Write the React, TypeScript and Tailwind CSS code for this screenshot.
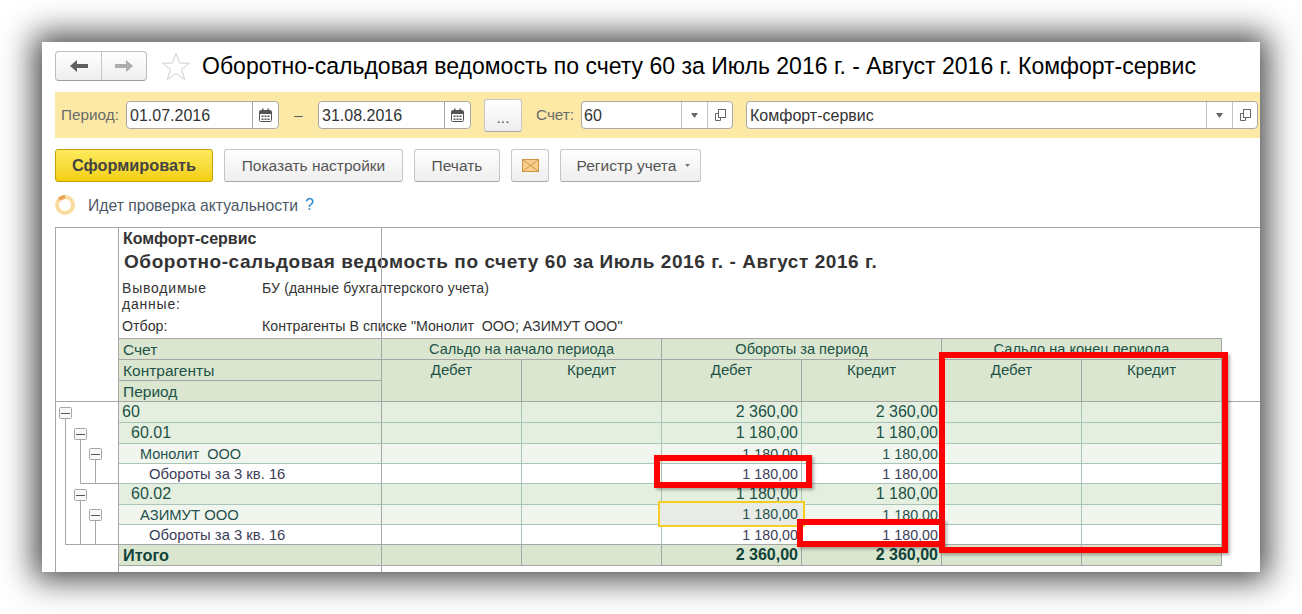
const big = "text-[16px] text-[#1d5248]";
const midNum = "text-[14.3px] text-[#24504c]";
const lowNum = "text-[14.3px] text-[#3c3c58]";

const rows = [
  { label: "60", pad: "pl-[3px]", bg: "bg-[#e5efdf]", text: big, num: big, d: "2 360,00", k: "2 360,00" },
  { label: "60.01", pad: "pl-[12px]", bg: "bg-[#e5efdf]", text: big, num: big, d: "1 180,00", k: "1 180,00" },
  { label: "Монолит  ООО", pad: "pl-[21px]", bg: "bg-[#f0f5ee]", text: "text-[14.5px] text-[#24504c]", num: midNum, d: "1 180,00", k: "1 180,00" },
  { label: "Обороты за 3 кв. 16", pad: "pl-[30px]", bg: "bg-white", text: "text-[14.8px] text-[#3c3c58]", num: lowNum, d: "1 180,00", k: "1 180,00" },
  { label: "60.02", pad: "pl-[12px]", bg: "bg-[#e5efdf]", text: big, num: big, d: "1 180,00", k: "1 180,00" },
  { label: "АЗИМУТ ООО", pad: "pl-[21px]", bg: "bg-[#f0f5ee]", text: "text-[14.8px] text-[#24504c]", num: midNum, d: "1 180,00", k: "1 180,00" },
  { label: "Обороты за 3 кв. 16", pad: "pl-[30px]", bg: "bg-white", text: "text-[14.8px] text-[#3c3c58]", num: lowNum, d: "1 180,00", k: "1 180,00" },
];

function CalendarIcon() {
  return (
    <svg width="13" height="14" viewBox="0 0 13 14">
      <rect x="0.5" y="2.5" width="12" height="11" rx="1" fill="#fff" stroke="#555" />
      <rect x="1" y="3" width="11" height="3" fill="#555" />
      <rect x="3" y="0.5" width="1.5" height="3" fill="#555" />
      <rect x="8.5" y="0.5" width="1.5" height="3" fill="#555" />
      <path d="M2.5 7.5h2v1.5h-2zM5.5 7.5h2v1.5h-2zM8.5 7.5h2v1.5h-2zM2.5 10.5h2v1.5h-2zM5.5 10.5h2v1.5h-2zM8.5 10.5h2v1.5h-2z" fill="#555" />
    </svg>
  );
}

function CopyIcon() {
  return (
    <svg width="13" height="14" viewBox="0 0 13 14" fill="none" stroke="#666">
      <rect x="4.5" y="1.5" width="7" height="8" fill="#fff" />
      <path d="M4.5 5.5h-3v7h5v-3" />
    </svg>
  );
}

function Caret() {
  return (
    <svg width="7" height="5" viewBox="0 0 7 5">
      <path d="M0 0h7L3.5 5z" fill="#666" />
    </svg>
  );
}

function DateField({ value }: { value: string }) {
  return (
    <div className="flex w-[153px] h-[28px] bg-white border border-[#a9a9a9] rounded-[4px]">
      <div className="flex-1 pl-[3px] text-[16px] leading-[28px] text-[#333]">{value}</div>
      <div className="w-[26px] border-l border-[#a9a9a9] flex items-center justify-center">
        <CalendarIcon />
      </div>
    </div>
  );
}

function SelectField({ value, className }: { value: string; className: string }) {
  return (
    <div className={`flex h-[28px] bg-white border border-[#a9a9a9] rounded-[4px] ${className}`}>
      <div className="flex-1 pl-[2px] text-[16px] leading-[28px] text-[#333]">{value}</div>
      <div className="w-[26px] border-l border-[#c4c4c4] flex items-center justify-center">
        <Caret />
      </div>
      <div className="w-[25px] border-l border-[#c4c4c4] flex items-center justify-center">
        <CopyIcon />
      </div>
    </div>
  );
}

function ToolButton({ children, className }: { children: React.ReactNode; className: string }) {
  return (
    <div className={`flex items-center justify-center h-[33px] rounded-[3px] border border-[#c6c6c6] border-b-[#a8a8a8] bg-linear-to-b from-white to-[#eeeeee] text-[15.5px] text-[#555] ${className}`}>
      {children}
    </div>
  );
}

export default function App() {
  const cell = "border-r border-b";
  return (
    <div className="w-[1302px] h-[614px] overflow-hidden bg-white pt-[42px] pl-[42px] font-['Liberation_Sans',Arial,sans-serif]">
      <div className="relative w-[1218px] h-[530px] bg-white overflow-visible shadow-[0_0_30px_8px_rgba(0,0,0,0.72)]">
        <div className="h-[530px] overflow-hidden pl-[13px] pt-[9px]">
          {/* Header */}
          <div className="flex items-center h-[30px]">
            <div className="flex w-[92px] h-[30px] rounded-[4px] border border-[#bdbdbd] border-b-[#9f9f9f] bg-linear-to-b from-white to-[#eeeeee]">
              <div className="w-[46px] border-r border-[#c8c8c8] flex items-center justify-center">
                <svg width="18" height="12" viewBox="0 0 18 12">
                  <path d="M0 6l7-6v4h11v4H7v4z" fill="#5f5f5f" />
                </svg>
              </div>
              <div className="flex-1 flex items-center justify-center">
                <svg width="18" height="12" viewBox="0 0 18 12">
                  <path d="M18 6l-7-6v4H0v4h11v4z" fill="#adadad" />
                </svg>
              </div>
            </div>
            <svg className="ml-[14px]" width="30" height="29" viewBox="0 0 30 29">
              <path d="M15 1.5l3.6 9.6h10l-8 6.2 3 10.2L15 21.4l-8.6 6.1 3-10.2-8-6.2h10z" fill="#fff" stroke="#cfcfcf" />
            </svg>
            <h1 className="ml-[11px] text-[23.03px] leading-[30px] text-black whitespace-nowrap">
              Оборотно-сальдовая ведомость по счету 60 за Июль 2016 г. - Август 2016 г. Комфорт-сервис
            </h1>
          </div>

          {/* Filter bar */}
          <div className="flex items-center h-[46px] mt-[11px] bg-[#fce9a6] pl-[6px] overflow-hidden">
            <span className="w-[65px] text-[15.3px] text-[#6b6b6b]">Период:</span>
            <DateField value="01.07.2016" />
            <span className="w-[39px] text-center text-[15px] text-[#555]">–</span>
            <DateField value="31.08.2016" />
            <ToolButton className="w-[38px] ml-[13px] pt-[6px] text-[#444]">...</ToolButton>
            <span className="ml-[14px] w-[45px] text-[15.3px] text-[#6b6b6b]">Счет:</span>
            <SelectField value="60" className="w-[152px]" />
            <SelectField value="Комфорт-сервис" className="w-[512px] ml-[13px] pl-px shrink-0" />
          </div>

          {/* Actions */}
          <div className="flex items-center mt-[11px] gap-[11px]">
            <div className="flex items-center justify-center w-[158px] h-[33px] rounded-[3px] border border-[#c2a000] bg-linear-to-b from-[#fdeb5a] to-[#f4cf00] text-[16.3px] font-bold text-[#444]">
              Сформировать
            </div>
            <ToolButton className="w-[179px]">Показать настройки</ToolButton>
            <ToolButton className="w-[86px]">Печать</ToolButton>
            <ToolButton className="w-[38px]">
              <svg width="17" height="13" viewBox="0 0 17 13">
                <rect x="0.5" y="0.5" width="16" height="12" fill="#f6cf8e" stroke="#cf9440" />
                <path d="M1 1l15 11M16 1L1 12" stroke="#cf9440" fill="none" />
              </svg>
            </ToolButton>
            <ToolButton className="w-[141px] gap-[9px] pl-[6px]">
              Регистр учета
              <svg width="5" height="3" viewBox="0 0 5 3">
                <path d="M0 0h5L2.5 3z" fill="#777" />
              </svg>
            </ToolButton>
          </div>

          {/* Status */}
          <div className="flex items-center h-[20px] mt-[13px]">
            <svg width="20" height="20" viewBox="0 0 20 20" fill="none">
              <circle cx="10" cy="10" r="8" stroke="#fbdca0" strokeWidth="4" />
              <path d="M4.3 4.3A8 8 0 0 1 10 2" stroke="#e8a455" strokeWidth="4" />
            </svg>
            <span className="ml-[13px] pt-[2px] text-[15.7px] leading-[22px] text-[#4d5866]">Идет проверка актуальности</span>
            <span className="ml-[7px] text-[16px] leading-[20px] text-[#1f86c8]">?</span>
          </div>

          {/* Report */}
          <div className="mt-[12px] border-t border-[#a6a6a6] grid grid-cols-[64px_263px_140px_140px_140px_140px_140px_140px_38px] grid-rows-[111px_21px_21px_21px_21px_21px_20px_20px_21px_20px_20px_21px_7px] text-[#1d5248]">
            <div className="row-span-4 border-l border-r border-b border-[#a6a6a6]" />
            <div className="border-b border-[#a6a6a6] pl-[4px] whitespace-nowrap text-[#333]">
              <div className="text-[16px] leading-[16px] pt-[3px] font-bold">Комфорт-сервис</div>
              <div className="text-[19px] leading-[22px] mt-[4px] ml-px font-bold tracking-[0.56px]">
                Оборотно-сальдовая ведомость по счету 60 за Июль 2016 г. - Август 2016 г.
              </div>
              <div className="flex mt-[7px] text-[14px] leading-[16px] -ml-px">
                <div className="w-[140px] shrink-0 tracking-[0.8px]">Выводимые<br />данные:</div>
                <div className="tracking-[0.17px]">БУ (данные бухгалтерского учета)</div>
              </div>
              <div className="flex mt-[6px] text-[14.2px] leading-[16px] -ml-px">
                <div className="w-[140px] shrink-0">Отбор:</div>
                <div className="whitespace-pre">Контрагенты В списке "Монолит  ООО; АЗИМУТ ООО"</div>
              </div>
            </div>
            <div className="col-span-6 -ml-px border-l border-b border-[#a6a6a6]" />
            <div className="row-span-4 border-b border-[#a6a6a6]" />

            {/* Table head */}
            <div className={`${cell} border-[#a6a6a6] bg-[#dae6cf] pl-[4px] text-[15.5px] leading-[21px]`}>Счет</div>
            <div className={`col-span-2 ${cell} border-[#a6a6a6] bg-[#dae6cf] text-center text-[14.6px] leading-[21px]`}>Сальдо на начало периода</div>
            <div className={`col-span-2 ${cell} border-[#a6a6a6] bg-[#dae6cf] text-center text-[14.6px] leading-[21px]`}>Обороты за период</div>
            <div className={`col-span-2 ${cell} border-[#a6a6a6] bg-[#dae6cf] text-center text-[14.6px] leading-[21px]`}>Сальдо на конец периода</div>
            <div className={`${cell} border-[#a6a6a6] bg-[#dae6cf] pl-[4px] text-[15.5px] leading-[21px]`}>Контрагенты</div>
            {["Дебет", "Кредит", "Дебет", "Кредит", "Дебет", "Кредит"].map((t, i) => (
              <div key={i} className={`row-span-2 ${cell} border-[#a6a6a6] bg-[#dae6cf] text-center text-[15px] leading-[20px]`}>{t}</div>
            ))}
            <div className={`${cell} border-[#a6a6a6] bg-[#dae6cf] pl-[4px] text-[15.5px] leading-[21px]`}>Период</div>

            {/* Tree */}
            <div className="col-start-1 row-start-5 row-span-9 border-l border-r border-[#a6a6a6]">
              <svg width="62" height="171" viewBox="0 0 62 171" fill="none">
                <path d="M9.5 17V142.5H62M24.5 37V81.5H62M39.5 57V81.5M24.5 98V142.5M39.5 118V142.5" stroke="#a6a6a6" />
                {[[3, 5], [18, 26], [33, 46], [18, 87], [33, 107]].map(([x, y], i) => (
                  <g key={i}>
                    <rect x={x + 0.5} y={y + 0.5} width="12" height="11" rx="1" fill="#f8f8f8" stroke="#a6a6a6" />
                    <path d={`M${x + 2} ${y + 6.5}h9`} stroke="#555" />
                  </g>
                ))}
              </svg>
            </div>

            {/* Data */}
            {rows.map((r, i) => {
              const line = i === 6 ? "border-b-[#a6a6a6]" : "border-b-[#a9c5b9]";
              const wrap = `${cell} ${r.bg} ${line} border-r-[#a9c5b9] leading-[20px] overflow-hidden whitespace-nowrap`;
              return (
                <div key={i} className="contents">
                  <div className={`col-start-2 ${cell} ${r.bg} ${line} border-r-[#a6a6a6] leading-[20px] whitespace-pre ${r.pad} ${r.text}`}>{r.label}</div>
                  <div className={wrap} />
                  <div className={wrap} />
                  <div className={`${wrap} pr-[3px] text-right ${r.num}`}>{r.d}</div>
                  <div className={`${wrap} pr-[3px] text-right ${r.num}`}>{r.k}</div>
                  <div className={wrap} />
                  <div className={wrap} />
                </div>
              );
            })}

            {/* Totals */}
            <div className={`col-start-2 ${cell} border-[#a6a6a6] bg-[#dae6cf] pl-[4px] text-[16.3px] leading-[21px] font-bold text-[#0f4338]`}>Итого</div>
            <div className={`${cell} border-[#a6a6a6] bg-[#dae6cf]`} />
            <div className={`${cell} border-[#a6a6a6] bg-[#dae6cf]`} />
            <div className={`${cell} border-[#a6a6a6] bg-[#dae6cf] pr-[3px] text-right text-[16px] leading-[20px] font-bold text-[#0f4338]`}>2 360,00</div>
            <div className={`${cell} border-[#a6a6a6] bg-[#dae6cf] pr-[3px] text-right text-[16px] leading-[20px] font-bold text-[#0f4338]`}>2 360,00</div>
            <div className={`${cell} border-[#a6a6a6] bg-[#dae6cf]`} />
            <div className={`${cell} border-[#a6a6a6] bg-[#dae6cf]`} />
            <div className="col-start-2 row-start-13 border-r border-[#a6a6a6]" />
          </div>
        </div>

        {/* Annotations drawn over the screenshot */}
        <div className="absolute left-[616px] top-[459px] w-[147px] h-[26px] border-2 border-[#f6cd22] bg-[#e8ebe6] pr-[5px] text-right text-[14.3px] leading-[22px] text-[#24504c]">1 180,00</div>
        <div className="absolute left-[612px] top-[413px] w-[158px] h-[33px] border-[6px] border-[#ff0000] shadow-[2px_2px_3px_rgba(0,0,0,0.3)]" />
        <div className="absolute left-[755px] top-[477px] w-[148px] h-[28px] border-[6px] border-[#ff0000] shadow-[2px_2px_3px_rgba(0,0,0,0.3)]" />
        <div className="absolute left-[897px] top-[310px] w-[289px] h-[201px] border-[6px] border-[#ff0000] shadow-[2px_2px_3px_rgba(0,0,0,0.3)]" />
      </div>
    </div>
  );
}
